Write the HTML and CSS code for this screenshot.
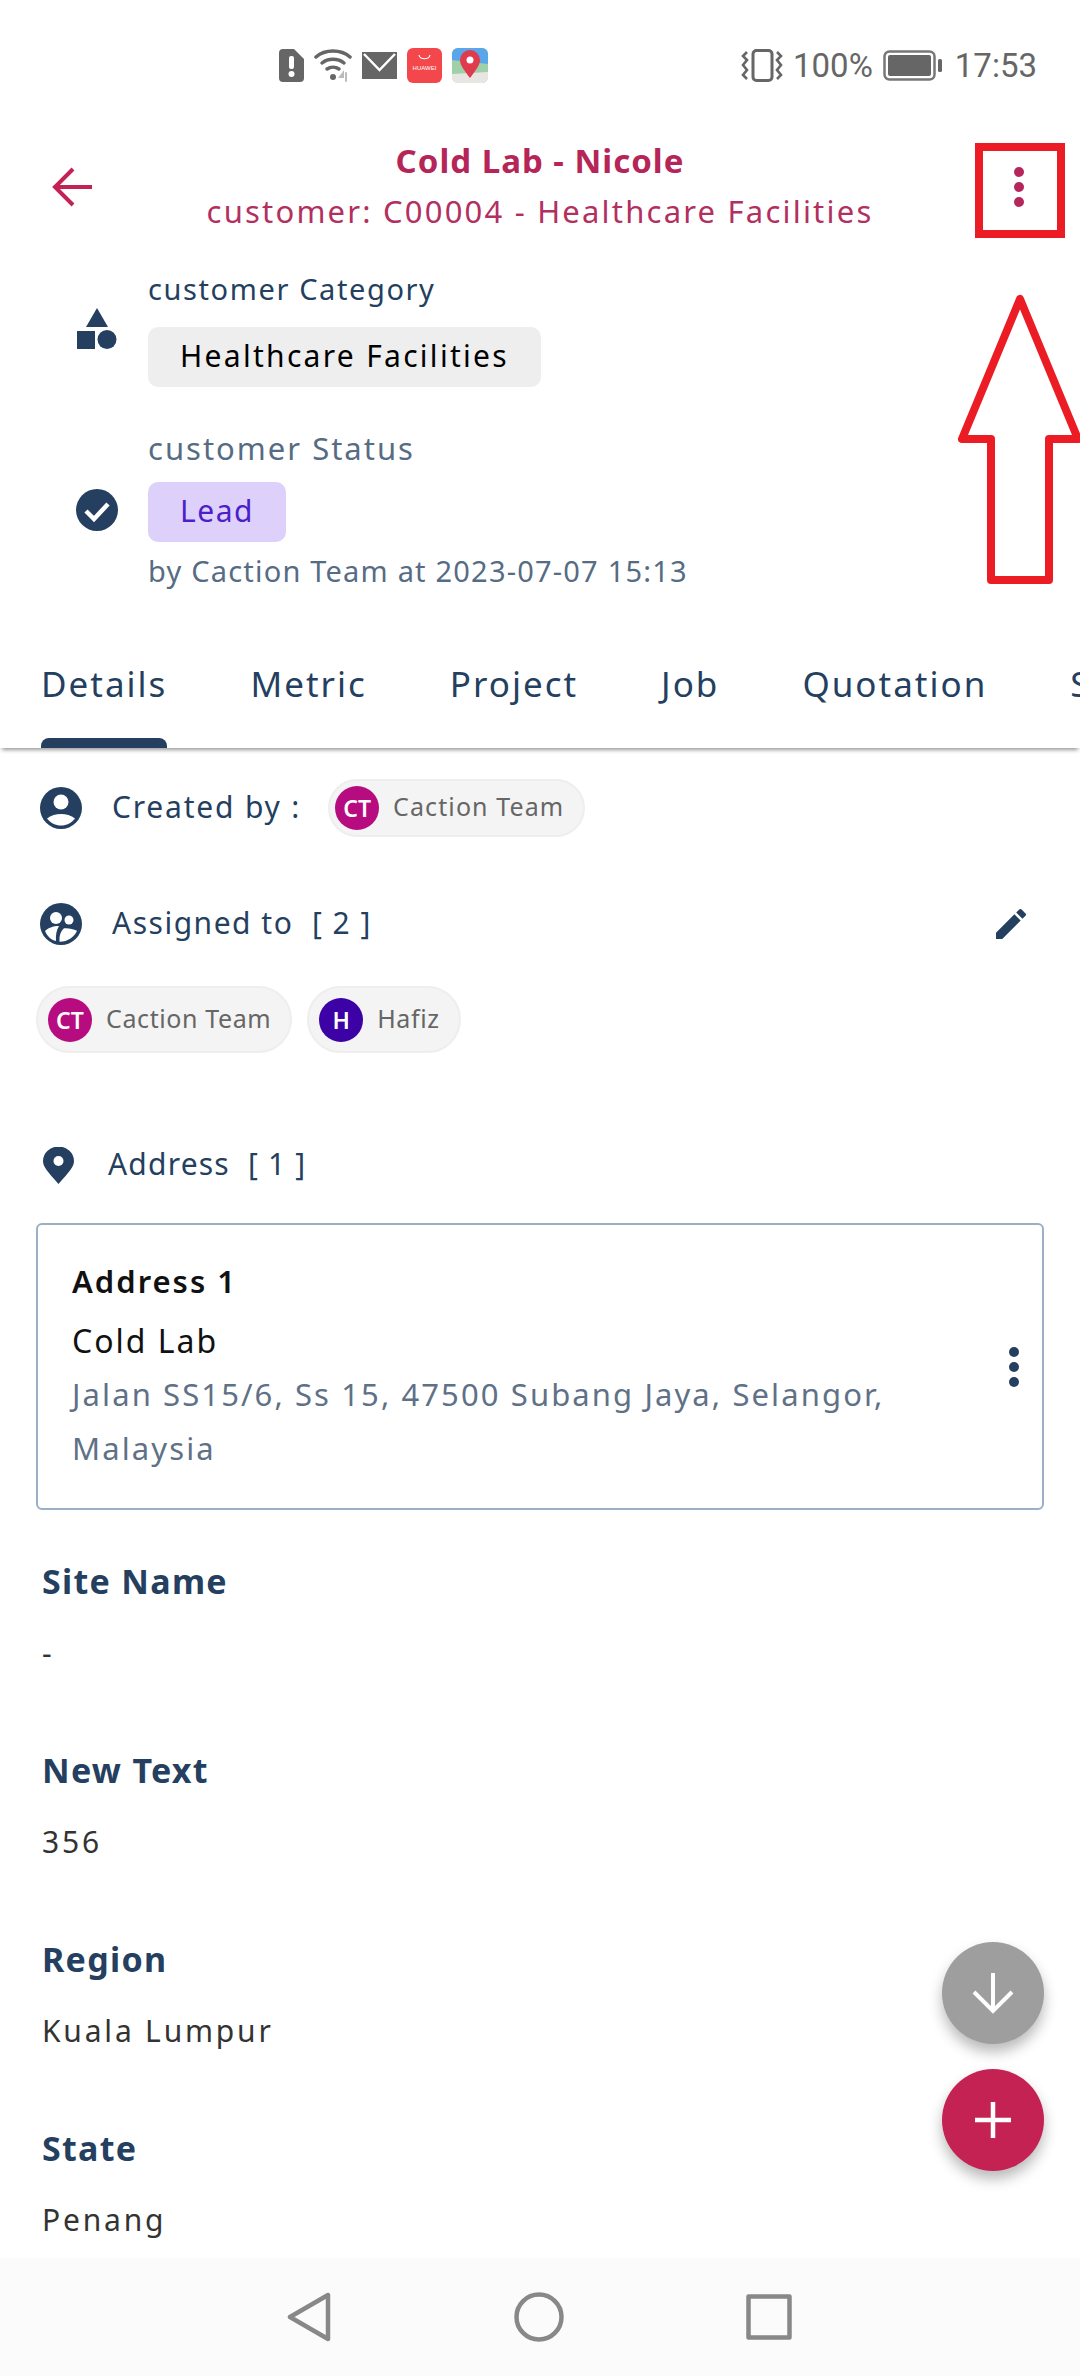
FILE: index.html
```html
<!DOCTYPE html>
<html lang="en">
<head>
  <meta charset="UTF-8">
  <title>Cold Lab - Nicole</title>
  <link rel="stylesheet" href="styles.css">
</head>
<body>
<div class="screen">

  <div class="status">
    <div class="status-left">
      <svg width="25" height="33" viewBox="0 0 25 33"><path d="M4 0h11l10 10v19a4 4 0 0 1-4 4H4a4 4 0 0 1-4-4V4a4 4 0 0 1 4-4z" fill="#666"/><rect x="10" y="7" width="5" height="13" rx="2" fill="#fff"/><circle cx="12.500" cy="25" r="3" fill="#fff"/></svg>
      <svg width="38" height="33" viewBox="0 0 38 33" fill="none" stroke="#666" stroke-width="3.500" stroke-linecap="round"><path d="M2 8C11 0 27 0 36 8"/><path d="M8 14c6-5 16-5 22 0"/><path d="M13 20c3.500-2.500 8.500-2.500 12 0"/><circle cx="19" cy="28" r="3" fill="#666" stroke="none"/><path d="M29 24l-3 4h3zM32 24v8" stroke="#bbb" stroke-width="2"/></svg>
      <svg class="ic-mail" width="35" height="27" viewBox="0 0 35 27"><rect width="35" height="27" fill="#666"/><path d="M2 2l15.500 16L33 2" fill="none" stroke="#fff" stroke-width="2.500"/></svg>
      <svg width="35" height="35" viewBox="0 0 35 35"><rect width="35" height="35" rx="6" fill="#f4474c"/><path d="M12 7c1 5 10 5 11 0" fill="none" stroke="#fff" stroke-width="1.200"/><text x="17.500" y="22" class="hw">HUAWEI</text></svg>
      <svg width="36" height="35" viewBox="0 0 36 35"><rect width="36" height="35" rx="6" fill="#9fd0a8"/><path d="M6 0h24a6 6 0 0 1 6 6v10L0 12V6a6 6 0 0 1 6-6z" fill="#5aa6ea"/><path d="M0 26l36-2v5a6 6 0 0 1-6 6H6a6 6 0 0 1-6-6z" fill="#e8e6e2"/><path d="M18 30C12 22 8 17 8 12a10 10 0 0 1 20 0c0 5-4 10-10 18z" fill="#df3b4d"/><circle cx="18" cy="12" r="3.500" fill="#fff"/></svg>
    </div>
    <div class="status-right">
      <svg width="42" height="33" viewBox="0 0 42 33" fill="none" stroke="#666" stroke-width="3"><rect x="12" y="1.500" width="19" height="30" rx="3.500"/><path d="M6 3L2 7l4 4-4 5 4 5-4 5 4 4M36 3l4 4-4 4 4 5-4 5 4 5-4 4" stroke-width="2.600"/></svg>
      <span class="pct">100%</span>
      <svg width="60" height="31" viewBox="0 0 60 31"><rect x="1.500" y="1.500" width="50" height="28" rx="5" fill="none" stroke="#777" stroke-width="2.500"/><rect x="5" y="5" width="43" height="21" rx="2" fill="#666"/><rect x="55" y="9" width="4" height="13" rx="1.500" fill="#666"/></svg>
      <span class="clock">17:53</span>
    </div>
  </div>

  <header class="header">
    <svg class="back" width="40" height="40" viewBox="0 0 40 40" fill="none" stroke="#c22354" stroke-width="4"><path d="M40 20H3M21 2L3 20l18 18"/></svg>
    <div class="titles">
      <div class="title">Cold Lab - Nicole</div>
      <div class="subtitle">customer: C00004 - Healthcare Facilities</div>
    </div>
    <div class="more more-top"><i></i><i></i><i></i></div>
  </header>

  <section class="meta">
    <div class="meta-row">
      <svg width="42" height="41" viewBox="-1 0 42 41" fill="#243f60"><path d="M20 0l11 19H9z"/><rect y="23" width="18" height="18"/><circle cx="30" cy="31.500" r="9.500"/></svg>
      <div class="meta-body">
        <div class="meta-label">customer Category</div>
        <span class="tag tag-grey">Healthcare Facilities</span>
      </div>
    </div>
    <div class="meta-row meta-row-status">
      <svg width="42" height="42" viewBox="0 0 42 42"><circle cx="21" cy="21" r="21" fill="#243f60"/><path d="M10 22l8 8 14-15" fill="none" stroke="#fff" stroke-width="4.500"/></svg>
      <div class="meta-body">
        <div class="meta-label meta-label-muted">customer Status</div>
        <span class="tag tag-purple">Lead</span>
        <div class="meta-by">by Caction Team at 2023-07-07 15:13</div>
      </div>
    </div>
  </section>

  <nav class="tabs">
    <div class="tab tab-active">Details</div>
    <div class="tab">Metric</div>
    <div class="tab">Project</div>
    <div class="tab">Job</div>
    <div class="tab">Quotation</div>
    <div class="tab">Site</div>
  </nav>

  <main class="content">
    <div class="line line-created">
      <svg width="42" height="42" viewBox="0 0 42 42"><circle cx="21" cy="21" r="21" fill="#243f60"/><circle cx="21" cy="15" r="7.500" fill="#fff"/><path d="M7 31.500c4-3.200 9-4.500 14-4.500s10 1.300 14 4.500c-3.500 4.500-8.500 7-14 7s-10.500-2.500-14-7z" fill="#fff"/></svg>
      <span class="line-text">Created by :</span>
      <span class="chip chip-created"><b class="avatar av-ct">CT</b><span class="chip-name">Caction Team</span></span>
    </div>

    <div class="line line-assigned">
      <svg width="42" height="42" viewBox="0 0 42 42"><circle cx="21" cy="21" r="21" fill="#243f60"/><circle cx="16" cy="15" r="6" fill="#fff"/><circle cx="29" cy="17" r="4.500" fill="#fff"/><path d="M5 28c3-3 8-5 14-5-2.500 4-3.500 9-3 15-5-1-9-5-11-10z" fill="#fff"/><path d="M19.500 38.800c-.5-6 1-10.500 4.500-13.500 4-.5 9 .5 13 2.500-2.500 6-9 11-17.500 11z" fill="#fff"/></svg>
      <span class="line-text line-text-assigned">Assigned to&nbsp; [ 2 ]</span>
      <svg class="edit" width="40" height="40" viewBox="0 0 24 24" fill="#243f60"><path d="M3 17.250V21h3.750L17.810 9.940l-3.750-3.750L3 17.250zM20.710 7.040a1 1 0 0 0 0-1.410l-2.340-2.340a1 1 0 0 0-1.410 0l-1.830 1.830 3.750 3.750 1.830-1.830z"/></svg>
    </div>

    <div class="chips">
      <span class="chip"><b class="avatar av-ct">CT</b><span class="chip-name">Caction Team</span></span>
      <span class="chip"><b class="avatar av-h">H</b><span class="chip-name">Hafiz</span></span>
    </div>

    <div class="line line-address">
      <svg width="31" height="37" viewBox="0 0 31 37"><path d="M15.500 37C5 25 0 20 0 14a15.500 14.500 0 0 1 31 0c0 6-5 11-15.500 23z" fill="#243f60"/><circle cx="15.500" cy="14" r="5" fill="#fff"/></svg>
      <span class="line-text">Address&nbsp; [ 1 ]</span>
    </div>

    <div class="card">
      <div class="card-body">
        <div class="card-title">Address 1</div>
        <div class="card-name">Cold Lab</div>
        <div class="card-addr">Jalan SS15/6, Ss 15, 47500 Subang Jaya, Selangor, Malaysia</div>
      </div>
      <div class="more more-card"><i></i><i></i><i></i></div>
    </div>

    <dl class="fields">
      <dt>Site Name</dt><dd>-</dd>
      <dt>New Text</dt><dd>356</dd>
      <dt>Region</dt><dd>Kuala Lumpur</dd>
      <dt>State</dt><dd>Penang</dd>
    </dl>
  </main>

  <footer class="navbar">
    <svg width="44" height="50" viewBox="0 0 44 50" fill="none" stroke="#888" stroke-width="4.500" stroke-linejoin="round"><path d="M41 3v44L3 25z"/></svg>
    <svg width="50" height="50" viewBox="0 0 50 50" fill="none" stroke="#888" stroke-width="4.500"><circle cx="25" cy="25" r="22.500"/></svg>
    <svg width="46" height="46" viewBox="0 0 46 46" fill="none" stroke="#888" stroke-width="4.500" stroke-linejoin="round"><rect x="2.500" y="2.500" width="41" height="41"/></svg>
  </footer>

  <!-- floating buttons -->
  <div class="fab fab-down">
    <svg width="42" height="42" viewBox="0 0 42 42" fill="none" stroke="#fff" stroke-width="4"><path d="M21 1v36M2 20l19 19 19-19"/></svg>
  </div>
  <div class="fab fab-add">
    <svg width="38" height="38" viewBox="0 0 38 38" fill="none" stroke="#fff" stroke-width="4.500"><path d="M19 1v36M1 19h36"/></svg>
  </div>

  <!-- red annotation drawn on the screenshot -->
  <div class="mark-box"></div>
  <svg class="mark-arrow" width="130" height="300" viewBox="0 0 130 300" fill="none" stroke="#ec1c24" stroke-width="8" stroke-linejoin="round"><path d="M70 9L12 149h29v141h58V149h29L70 9z"/></svg>
</div>
</body>
</html>
```

FILE: styles.css
```css
* { box-sizing: border-box; }
html, body { margin: 0; padding: 0; }
body { font-family: "Noto Sans", "Open Sans", sans-serif; color: #243f60; background: #fff; }
svg { display: block; flex: none; }

.screen { position: relative; width: 1080px; height: 2376px; overflow: hidden; display: flex; flex-direction: column; }

/* status bar */
.status { height: 130px; padding: 22px 43px 22px 279px; display: flex; justify-content: space-between; align-items: center; color: #666; font-family: "Roboto", sans-serif; font-size: 33px; }
.status-left { display: flex; align-items: center; gap: 10px; }
.status-right { display: flex; align-items: center; gap: 10px; }
.clock { margin-left: 2px; }
.hw { font-size: 6px; fill: #fff; text-anchor: middle; font-family: "Liberation Sans", sans-serif; }

/* header */
.header { height: 135px; padding: 5px 15px 0 52px; display: flex; align-items: flex-start; }
.back { margin-top: 32px; }
.titles { flex: 1; text-align: center; padding-right: 26px; white-space: nowrap; }
.title { font-size: 33px; font-weight: 700; line-height: 51px; letter-spacing: 1px; color: #b52558; }
.subtitle { font-size: 31px; line-height: 51px; letter-spacing: 2.2px; color: #b2305f; }
.more { display: flex; flex-direction: column; gap: 5px; width: 10px; }
.more i { width: 10px; height: 10px; border-radius: 50%; background: currentColor; display: block; }
.more-top { color: #b5265a; margin: 32px 41px 0 0; }

/* category + status */
.meta { padding: 4px 0 0 76px; height: 375px; }
.meta-row { display: flex; align-items: center; gap: 30px; }
.meta-row-status { margin-top: 41px; }
.meta-label { font-size: 29px; line-height: 40px; margin-bottom: 18px; letter-spacing: 1.6px; }
.meta-label-muted { color: #566c84; font-size: 31px; letter-spacing: 2px; margin-bottom: 14px; }
.tag { display: inline-block; height: 60px; line-height: 58px; padding: 0 32px; border-radius: 10px; font-size: 30px; }
.tag-grey { background: #eeeeee; color: #000; letter-spacing: 2.3px; }
.tag-purple { background: #ddd1fb; color: #4c1fc7; letter-spacing: 1.5px; }
.meta-by { font-size: 29px; line-height: 40px; color: #566c84; margin-top: 9px; letter-spacing: 1.2px; }

/* tabs */
.tabs { height: 108px; padding-left: 41px; display: flex; gap: 83px; overflow: hidden; white-space: nowrap; font-size: 35px; letter-spacing: 2px; box-shadow: 0 4px 4px -2px rgba(0,0,0,.4); position: relative; }
.tab { display: flex; flex-direction: column; justify-content: space-between; padding-top: 20px; }
.tab-active::after { content: ""; display: block; height: 10px; border-radius: 8px 8px 0 0; background: #243f60; }

/* body */
.content { flex: 1; padding: 0 36px; overflow: hidden; }
.line { display: flex; align-items: center; font-size: 30px; white-space: nowrap; }
.line-text { margin: 0 0 3px 30px; letter-spacing: 1.8px; }
.line-text-assigned { letter-spacing: 1.5px; }
.line-created { height: 58px; margin-top: 31px; padding-left: 4px; }
.line-assigned { height: 42px; margin-top: 66px; padding-left: 4px; }
.line-address { height: 40px; margin-top: 92px; padding-left: 7px; }
.line-address .line-text { margin-left: 34px; letter-spacing: 1.2px; }
.edit { margin-left: auto; margin-right: 13px; }

.chip { display: inline-flex; align-items: center; gap: 14px; height: 67px; padding: 0 19px 0 10px; border-radius: 34px; background: #f4f4f4; border: 2px solid #eeeeee; color: #666; font-size: 25px; letter-spacing: .6px; white-space: nowrap; }
.chip-name { margin-bottom: 4px; }
.chip-created { height: 58px; margin-left: 27px; padding-left: 5px; letter-spacing: 1.1px; }
.avatar { width: 44px; height: 44px; border-radius: 50%; color: #fff; font-size: 23px; font-weight: 600; letter-spacing: 0; display: flex; align-items: center; justify-content: center; }
.av-ct { background: #b70c80; }
.av-h { background: #3d02a6; }
.chips { display: flex; gap: 15px; margin-top: 41px; }

.card { margin-top: 38px; height: 287px; padding: 36px 23px 0 34px; border: 2.500px solid #9bb0c4; border-radius: 6px; display: flex; align-items: center; }
.card-body { flex: 1; align-self: flex-start; }
.card-title { font-size: 31px; font-weight: 600; line-height: 40px; letter-spacing: 2px; color: #111; }
.card-name { font-size: 32px; line-height: 40px; margin-top: 20px; letter-spacing: 2px; color: #111; }
.card-addr { font-size: 31px; line-height: 54px; margin-top: 6px; letter-spacing: 2.1px; color: #5f7186; width: 860px; }
.more-card { color: #243f60; margin-top: -36px; }

.fields { margin: 46px 0 0 6px; }
.fields dt { font-size: 34px; font-weight: 700; line-height: 50px; letter-spacing: 1.3px; }
.fields dd { margin: 22px 0 67px; font-size: 30px; line-height: 50px; letter-spacing: 2.8px; color: #333; }

/* android nav */
.navbar { height: 118px; flex: none; background: #fbfbfb; display: flex; align-items: center; padding: 0 288px 0 287px; justify-content: space-between; }

/* floating stuff */
.fab { position: absolute; left: 942px; width: 102px; height: 102px; border-radius: 50%; display: flex; align-items: center; justify-content: center; box-shadow: 0 8px 14px rgba(0,0,0,.28); }
.fab-down { top: 1942px; background: #9e9e9e; }
.fab-add { top: 2069px; background: #c42253; }

.mark-box { position: absolute; left: 975px; top: 143px; width: 90px; height: 95px; border: 8px solid #ec1c24; }
.mark-arrow { position: absolute; left: 950px; top: 290px; }
```
